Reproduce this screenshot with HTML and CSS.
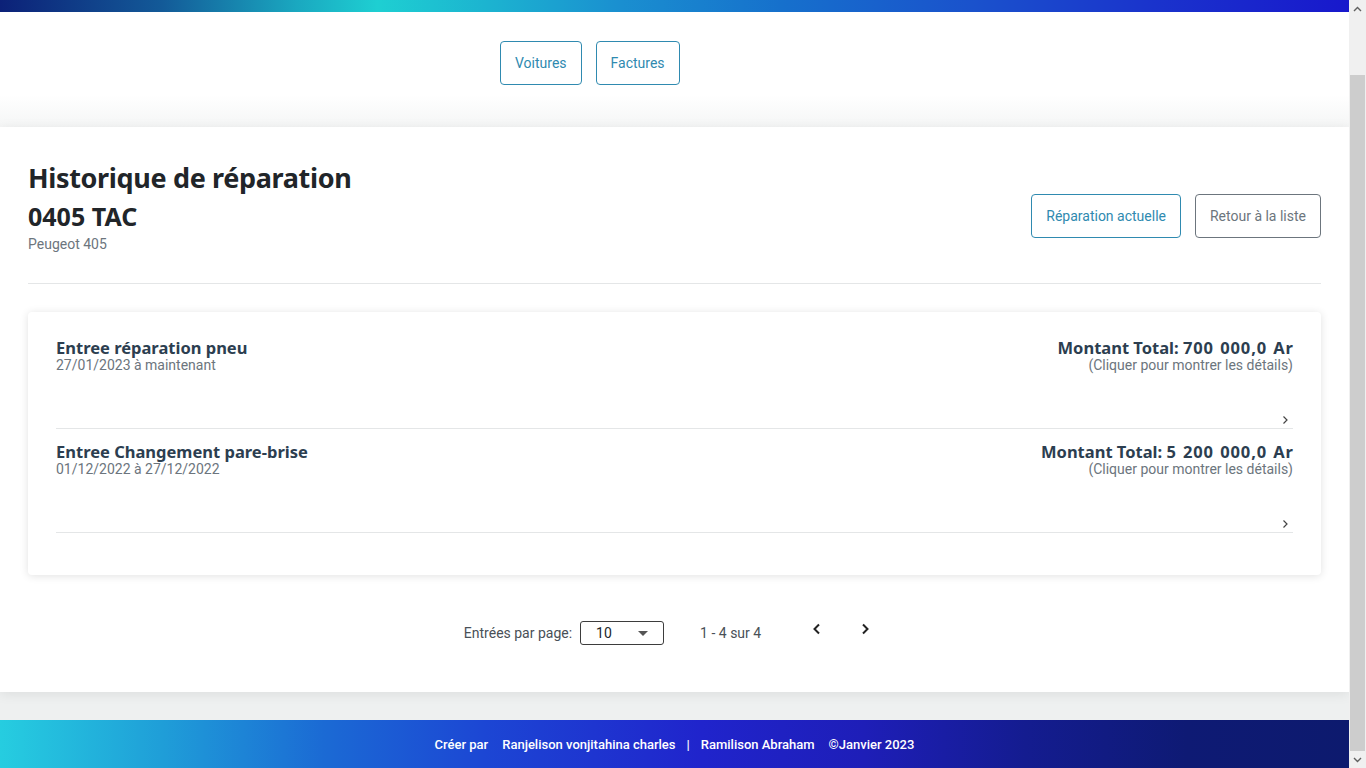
FILE: index.html
```html
<!DOCTYPE html>
<html lang="fr">
<head>
<meta charset="utf-8">
<title>Historique de réparation</title>
<link rel="stylesheet" href="styles.css">
</head>
<body>
<header class="topbar"></header>
<nav class="nav">
  <a class="btn btn-teal" href="#">Voitures</a>
  <a class="btn btn-teal" href="#">Factures</a>
</nav>
<main class="panel">
  <div class="head">
    <div class="ident">
      <h1 class="title">Historique de réparation</h1>
      <div class="plate">0405 TAC</div>
      <div class="model">Peugeot 405</div>
    </div>
    <div class="actions">
      <a class="btn btn-teal" href="#">Réparation actuelle</a>
      <a class="btn btn-gray" href="#">Retour à la liste</a>
    </div>
  </div>
  <hr class="rule">
  <section class="card">
    <div class="item">
      <div class="item-row">
        <div>
          <div class="item-title">Entree réparation pneu</div>
          <div class="item-sub">27/01/2023 à maintenant</div>
        </div>
        <div class="right">
          <div class="item-title">Montant Total: <span class="amount">700 000,0 Ar</span></div>
          <div class="item-sub">(Cliquer pour montrer les détails)</div>
        </div>
      </div>
      <div class="chev-row"><svg width="16" height="16" viewBox="0 0 16 16"><path d="M6.5 4.5 L10 8 L6.5 11.5" fill="none" stroke="#444" stroke-width="1.2"/></svg></div>
    </div>
    <div class="item">
      <div class="item-row">
        <div>
          <div class="item-title">Entree Changement pare-brise</div>
          <div class="item-sub">01/12/2022 à 27/12/2022</div>
        </div>
        <div class="right">
          <div class="item-title">Montant Total: <span class="amount">5 200 000,0 Ar</span></div>
          <div class="item-sub">(Cliquer pour montrer les détails)</div>
        </div>
      </div>
      <div class="chev-row"><svg width="16" height="16" viewBox="0 0 16 16"><path d="M6.5 4.5 L10 8 L6.5 11.5" fill="none" stroke="#444" stroke-width="1.2"/></svg></div>
    </div>
  </section>
  <div class="pager">
    <span class="pager-label">Entrées par page:</span>
    <div class="select"><span>10</span><svg width="10" height="5" viewBox="0 0 10 5"><path d="M0 0 H10 L5 5 Z" fill="#555"/></svg></div>
    <span class="pager-range">1 - 4 sur 4</span>
    <div class="pager-nav">
      <button class="pbtn" aria-label="précédent"><svg width="12" height="12" viewBox="0 0 12 12"><path d="M8 1.5 L3.5 6 L8 10.5" fill="none" stroke="#222" stroke-width="2"/></svg></button>
      <button class="pbtn" aria-label="suivant"><svg width="12" height="12" viewBox="0 0 12 12"><path d="M4 1.5 L8.5 6 L4 10.5" fill="none" stroke="#222" stroke-width="2"/></svg></button>
    </div>
  </div>
</main>
<footer class="footer">
  <span>Créer par</span>
  <span>Ranjelison vonjitahina charles</span>
  <span class="pipe">|</span>
  <span>Ramilison Abraham</span>
  <span>©Janvier 2023</span>
</footer>
<div class="scrollbar" aria-hidden="true">
  <div class="sb-btn"><svg width="9" height="6" viewBox="0 0 9 6"><path d="M1 5 L4.5 1.5 L8 5" fill="none" stroke="#606060" stroke-width="1.4"/></svg></div>
  <div class="sb-track"><div class="sb-thumb"></div></div>
  <div class="sb-btn"><svg width="9" height="6" viewBox="0 0 9 6"><path d="M1 1 L4.5 4.5 L8 1" fill="none" stroke="#606060" stroke-width="1.4"/></svg></div>
</div>
</body>
</html>
```

FILE: styles.css
```css
* { box-sizing: border-box; }
html, body { margin: 0; padding: 0; }
body {
  margin-right: 17px;
  background: #eef0f0;
  font-family: Roboto, "Liberation Sans", sans-serif;
  color: #212529;
  overflow: hidden;
}
.topbar {
  height: 12px;
  background: linear-gradient(90deg, #0c2178 0%, #135a98 12%, #1aa8c0 22%, #1ecfd2 28%, #1cb4d0 36%, #1a8fd0 46%, #1670cc 58%, #1a52cc 72%, #1a34cc 85%, #1818cc 100%);
}
.nav {
  height: 115px;
  padding: 29px 0 0 500px;
  display: flex;
  gap: 14px;
  align-items: flex-start;
  background: linear-gradient(#ffffff 72%, #f5f6f6);
}
.btn {
  height: 44px;
  padding: 0 14px;
  border: 1px solid;
  border-radius: 4px;
  background: #fff;
  font: 400 14px/1 Roboto, sans-serif;
  display: inline-flex;
  align-items: center;
  text-decoration: none;
}
.btn-teal { color: #2f8ab0; border-color: #2f8ab0; }
.btn-gray { color: #6c757d; border-color: #6c757d; }

.panel {
  background: #fff;
  box-shadow: 0 2px 12px rgba(0,0,0,0.08);
  padding: 34px 28px 39px;
}
.head {
  display: flex;
  justify-content: space-between;
  align-items: flex-start;
}
.title {
  margin: 0;
  font: 700 27px/34px "Noto Sans", "Open Sans", sans-serif;
  letter-spacing: -0.35px;
  color: #212529;
}
.plate {
  margin-top: 7px;
  font: 700 25px/29px "Noto Sans", "Open Sans", sans-serif;
  color: #212529;
}
.model {
  margin-top: 3px;
  font: 400 14px/20px Roboto, sans-serif;
  color: #6c757d;
}
.actions {
  display: flex;
  gap: 14px;
  padding-top: 33px;
}
.rule {
  margin: 29px 0 28px;
  border: 0;
  border-top: 1px solid #e4e6e7;
  height: 0;
}
.card {
  background: #fff;
  border-radius: 4px;
  box-shadow: 0 1px 8px rgba(0,0,0,0.12);
  padding: 13px 28px 42px;
}
.item {
  padding-top: 13px;
  border-bottom: 1px solid #e4e6e7;
}
.item-row {
  display: flex;
  justify-content: space-between;
}
.item-title {
  font: 700 16.5px/20px "Noto Sans", "Open Sans", sans-serif;
  color: #2c3e50;
}
.amount {
  letter-spacing: 0.9px;
  word-spacing: 1px;
}
.item-sub {
  font: 400 14px/14px Roboto, sans-serif;
  color: #6c757d;
}
.right { text-align: right; }
.right .item-title { margin-right: -0.9px; }
.chev-row {
  margin-top: 40px;
  height: 16px;
  display: flex;
  justify-content: flex-end;
}
.pager {
  margin-top: 38px;
  height: 40px;
  display: flex;
  justify-content: center;
  align-items: center;
  font: 400 14px/1 Roboto, sans-serif;
  color: #495057;
}
.select {
  margin-left: 8px;
  width: 84px;
  height: 24px;
  border: 1px solid #3d3d3d;
  border-radius: 3px;
  display: flex;
  align-items: center;
  justify-content: space-between;
  padding: 0 15px;
  color: #212529;
}
.pager-range { margin-left: 36px; }
.pager-nav {
  margin-left: 36px;
  display: flex;
  gap: 8px;
}
.pbtn {
  width: 40px;
  height: 40px;
  border: 0;
  background: transparent;
  padding: 0;
  display: flex;
  align-items: center;
  justify-content: center;
  margin-top: -8px;
}
.footer {
  margin-top: 28px;
  height: 48px;
  display: flex;
  justify-content: center;
  align-items: center;
  gap: 14px;
  color: #fff;
  font: 500 13px/1 Roboto, sans-serif;
  background: linear-gradient(90deg, #26cde0 0%, #1f9ed8 12%, #1b6ad4 24%, #1c46d4 36%, #2024cc 52%, #1e1eb8 64%, #141c90 76%, #0e1a74 88%, #0d1a6e 100%);
}
.footer .pipe { margin: 0 -3px; }

.scrollbar {
  position: fixed;
  top: 0;
  right: 0;
  width: 17px;
  height: 100vh;
  background: #f0f0f0;
  display: flex;
  flex-direction: column;
}
.sb-btn {
  height: 17px;
  display: flex;
  align-items: center;
  justify-content: center;
}
.sb-track {
  flex: 1;
  padding: 58px 1px 0;
  display: flex;
}
.sb-thumb {
  flex: 1;
  background: #cdcdcd;
}
```
